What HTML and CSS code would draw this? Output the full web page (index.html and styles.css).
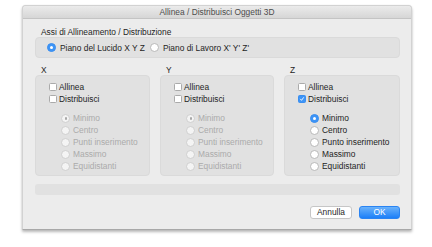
FILE: index.html
```html
<!DOCTYPE html>
<html>
<head>
<meta charset="utf-8">
<link rel="stylesheet" href="styles.css">
</head>
<body>
<div class="window">
  <div class="titlebar">Allinea / Distribuisci Oggetti 3D</div>
  <div class="content">
    <div class="section-label">Assi di Allineamento / Distribuzione</div>
    <div class="axes-box">
      <label class="opt"><span class="radio on"></span>Piano del Lucido X Y Z</label>
      <label class="opt opt-2"><span class="radio"></span>Piano di Lavoro X' Y' Z'</label>
    </div>
    <div class="columns">
      <div class="col">
        <div class="col-label">X</div>
        <div class="group">
          <div class="row"><span class="check"></span>Allinea</div>
          <div class="row"><span class="check"></span>Distribuisci</div>
          <div class="radios disabled">
            <div class="rrow"><span class="radio sel-dis"></span>Minimo</div>
            <div class="rrow"><span class="radio"></span>Centro</div>
            <div class="rrow"><span class="radio"></span>Punti inserimento</div>
            <div class="rrow"><span class="radio"></span>Massimo</div>
            <div class="rrow"><span class="radio"></span>Equidistanti</div>
          </div>
        </div>
      </div>
      <div class="col">
        <div class="col-label">Y</div>
        <div class="group">
          <div class="row"><span class="check"></span>Allinea</div>
          <div class="row"><span class="check"></span>Distribuisci</div>
          <div class="radios disabled">
            <div class="rrow"><span class="radio sel-dis"></span>Minimo</div>
            <div class="rrow"><span class="radio"></span>Centro</div>
            <div class="rrow"><span class="radio"></span>Punti inserimento</div>
            <div class="rrow"><span class="radio"></span>Massimo</div>
            <div class="rrow"><span class="radio"></span>Equidistanti</div>
          </div>
        </div>
      </div>
      <div class="col">
        <div class="col-label">Z</div>
        <div class="group">
          <div class="row"><span class="check"></span>Allinea</div>
          <div class="row"><span class="check checked"><svg viewBox="0 0 8 8" width="8" height="8"><path d="M2 4.2 L3.4 5.8 L6 2.2" fill="none" stroke="#fff" stroke-width="1.2" stroke-linecap="round" stroke-linejoin="round"/></svg></span>Distribuisci</div>
          <div class="radios">
            <div class="rrow"><span class="radio on"></span>Minimo</div>
            <div class="rrow"><span class="radio"></span>Centro</div>
            <div class="rrow"><span class="radio"></span>Punto inserimento</div>
            <div class="rrow"><span class="radio"></span>Massimo</div>
            <div class="rrow"><span class="radio"></span>Equidistanti</div>
          </div>
        </div>
      </div>
    </div>
    <div class="status-bar"></div>
    <div class="buttons">
      <div class="btn btn-cancel">Annulla</div>
      <div class="btn btn-ok">OK</div>
    </div>
  </div>
</div>
</body>
</html>
```
FILE: styles.css
```css
* { box-sizing: border-box; }
html, body { margin: 0; padding: 0; background: #ffffff; }
body {
  font-family: "Liberation Sans", Arial, sans-serif;
  font-size: 8.4px;
  color: #1e1e1e;
  width: 432px;
  height: 247px;
  overflow: hidden;
}
.window {
  margin: 5px 0 0 22px;
  width: 390px;
  height: 225px;
  background: #ececec;
  border: 1px solid #d2d2d2;
  border-bottom-color: #a8a8a8;
  border-radius: 4px 4px 1px 1px;
  box-shadow: 0 2px 3px rgba(0,0,0,0.28), 0 0 1px rgba(0,0,0,0.15);
  display: flex;
  flex-direction: column;
}
.titlebar {
  height: 13px;
  line-height: 13px;
  text-align: center;
  color: #4c4c4c;
  background: linear-gradient(#ebebeb, #d6d6d6);
  border-bottom: 1px solid #c4c4c4;
  border-radius: 3px 3px 0 0;
  flex: none;
}
.content {
  padding: 0 11px 0 12px;
  display: flex;
  flex-direction: column;
}
.section-label {
  margin-top: 8px;
  height: 10px;
  line-height: 10px;
  padding-left: 6px;
}
.axes-box {
  height: 21px;
  background: #e1e1e1;
  border: 1px solid #dadada;
  border-radius: 4px;
  display: flex;
  align-items: center;
  padding-left: 11px;
}
.opt { display: flex; align-items: center; }
.opt .radio { margin-right: 4px; }
.opt-2 { margin-left: 5px; }
.radio {
  display: inline-block;
  width: 9px;
  height: 9px;
  border-radius: 50%;
  background: #ffffff;
  border: 1px solid #b8b8b8;
  flex: none;
  position: relative;
}
.radio.on {
  background: #3d94f6;
  border-color: #3a8ef0;
}
.radio.on::after {
  content: "";
  position: absolute;
  left: 2px; top: 2px;
  width: 3px; height: 3px;
  border-radius: 50%;
  background: #ffffff;
}
.radio.sel-dis::after {
  content: "";
  position: absolute;
  left: 2.5px; top: 2.5px;
  width: 2.5px; height: 2.5px;
  border-radius: 50%;
  background: #a8a8a8;
}
.columns {
  display: grid;
  grid-template-columns: 115px 114px 116px;
  column-gap: 10px;
  margin-top: 8px;
}
.col-label {
  height: 9px;
  line-height: 9px;
  padding-left: 6px;
}
.group {
  height: 101px;
  background: #e1e1e1;
  border: 1px solid #dadada;
  border-radius: 4px;
  padding: 5px 0 0 13px;
}
.row {
  height: 12px;
  display: flex;
  align-items: center;
}
.check {
  display: inline-flex;
  width: 8px;
  height: 8px;
  background: #ffffff;
  border: 1px solid #aaaaaa;
  border-radius: 1.5px;
  margin-right: 2px;
  flex: none;
  align-items: center;
  justify-content: center;
}
.check.checked {
  background: #3d94f6;
  border-color: #3a8ef0;
}
.check svg { display: block; }
.radios {
  margin-top: 7px;
  padding-left: 12px;
}
.rrow {
  height: 12px;
  display: flex;
  align-items: center;
}
.rrow .radio { margin-right: 3px; }
.radios.disabled { color: #ababab; }
.radios.disabled .radio {
  background: #f4f4f4;
  border-color: #cfcfcf;
}
.status-bar {
  margin-top: 8px;
  height: 11px;
  background: #e1e1e1;
  border-radius: 3px;
}
.buttons {
  margin-top: 11px;
  display: flex;
  justify-content: flex-end;
  gap: 7px;
}
.btn {
  height: 13px;
  line-height: 11px;
  text-align: center;
  border-radius: 3px;
}
.btn-cancel {
  width: 42px;
  background: #ffffff;
  border: 1px solid #c6c6c6;
  color: #1e1e1e;
}
.btn-ok {
  width: 41px;
  background: linear-gradient(#6ab2fb, #1c7ff8);
  border: 1px solid #2a84f3;
  color: #ffffff;
}
```
